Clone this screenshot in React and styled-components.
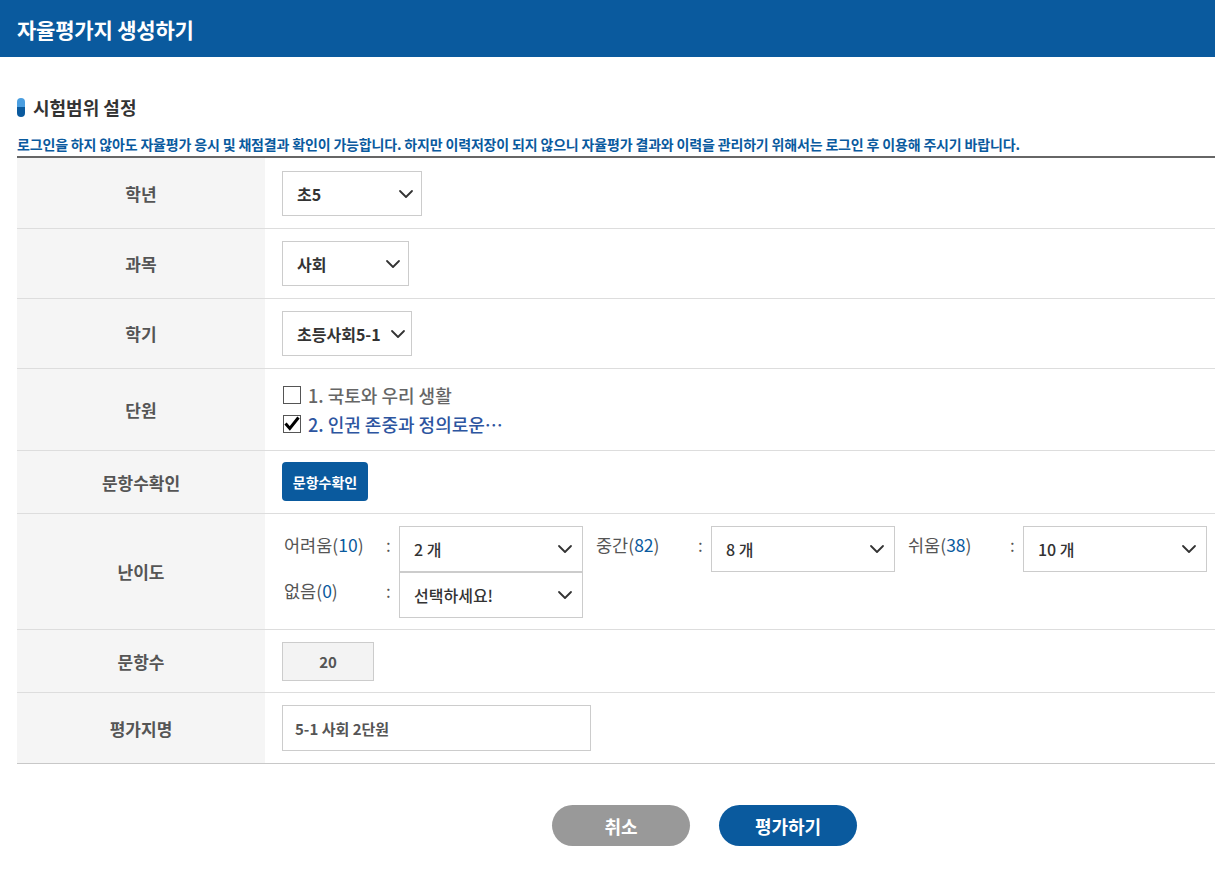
import React from "react";
import styled, { createGlobalStyle } from "styled-components";

const Global = createGlobalStyle`
  html, body { margin: 0; padding: 0; overflow: hidden; background: #fff; }
  body { font-family: "Noto Sans CJK KR", "Noto Sans", sans-serif; color: #444; }
  * { box-sizing: border-box; }
`;

const Page = styled.div`
  width: 1409px;
`;

const Header = styled.header`
  height: 57px;
  background: #0a5a9e;
  display: flex;
  align-items: center;
  padding: 0 17px;
`;

const HeaderTitle = styled.h1`
  margin: 0;
  color: #fff;
  font-size: 21px;
  font-weight: 700;
  letter-spacing: -0.2px;
`;

const Main = styled.main`
  padding: 0 17px 24px;
`;

const SectionTitle = styled.h2`
  margin: 37px 0 0;
  height: 26px;
  display: flex;
  align-items: center;
  gap: 8px;
  font-size: 18px;
  font-weight: 700;
  color: #333;
`;

const Pill = styled.span`
  width: 8px;
  height: 19px;
  border-radius: 4px;
  background: linear-gradient(#4a9ee0 0 50%, #0a5a9e 50% 100%);
`;

const Notice = styled.p`
  margin: 14px 0 0;
  line-height: 20px;
  padding-bottom: 2px;
  font-size: 14px;
  font-weight: 700;
  color: #0a5a9e;
  letter-spacing: -0.17px;
`;

const Table = styled.div`
  border-top: 2px solid #666;
  border-bottom: 1px solid #c8c8c8;
`;

const Row = styled.div`
  display: flex;
  & + & { border-top: 1px solid #ddd; }
`;

const Label = styled.div`
  width: 248px;
  flex: none;
  background: #f5f5f5;
  display: flex;
  align-items: center;
  justify-content: center;
  font-size: 17px;
  font-weight: 700;
  color: #555;
`;

const Cell = styled.div`
  flex: 1;
  display: flex;
  flex-wrap: wrap;
  align-items: center;
  padding: ${(p) => p.$pad || "12px 17px"};
`;

const SelectBox = styled.div`
  width: ${(p) => p.$w}px;
  height: ${(p) => p.$h || 45}px;
  border: 1px solid #ccc;
  background: #fff;
  display: flex;
  align-items: center;
  justify-content: space-between;
  padding: 0 ${(p) => p.$pr || 7}px 0 ${(p) => p.$pl || 14}px;
  font-size: 16px;
  font-weight: ${(p) => p.$weight || 700};
  color: #333;
  white-space: nowrap;
`;

const Chevron = () => (
  <svg width="16" height="10" viewBox="0 0 16 10" fill="none">
    <path d="M2 2 L8 8 L14 2" stroke="#333" strokeWidth="1.8" strokeLinecap="round" strokeLinejoin="round" />
  </svg>
);

const Select = ({ w, h, weight, pl, pr, children }) => (
  <SelectBox $w={w} $h={h} $weight={weight} $pl={pl} $pr={pr}>
    <span>{children}</span>
    <Chevron />
  </SelectBox>
);

const CheckList = styled.div`
  display: flex;
  flex-direction: column;
`;

const CheckItem = styled.label`
  display: flex;
  align-items: center;
  gap: 7px;
  height: 29px;
  font-size: 18px;
  font-weight: 500;
  color: ${(p) => (p.$on ? "#2d55a0" : "#666")};
  padding-left: 1px;
`;

const Box = styled.span`
  width: 18px;
  height: 18px;
  border: 1px solid #555;
  background: #fff;
  display: flex;
  align-items: center;
  justify-content: center;
`;

const Check = ({ on, children }) => (
  <CheckItem $on={on}>
    <Box>
      {on && (
        <svg width="16" height="15" viewBox="0 0 16 15">
          <path d="M1.5 7.5 L5.8 12.5 L14.5 1.5" stroke="#000" strokeWidth="3" fill="none" strokeLinejoin="miter" />
        </svg>
      )}
    </Box>
    {children}
  </CheckItem>
);

const SmallButton = styled.button`
  width: 86px;
  height: 39px;
  border: 0;
  border-radius: 4px;
  background: #0a5a9e;
  color: #fff;
  font-family: inherit;
  font-size: 14px;
  font-weight: 700;
  padding: 0;
`;

const Group = styled.div`
  width: 300px;
  height: 46px;
  display: flex;
  margin-right: 12px;
`;

const GroupLabel = styled.span`
  width: 100px;
  padding-left: 1px;
  line-height: 38px;
  font-size: 17.5px;
  color: #555;
  white-space: nowrap;
  b { font-weight: 400; color: #0a5a9e; }
`;

const Colon = styled.span`
  width: 16px;
  padding-left: 3px;
  line-height: 38px;
  font-size: 17px;
  color: #555;
`;

const Difficulty = ({ name, count, value }) => (
  <Group>
    <GroupLabel>
      {name}(<b>{count}</b>)
    </GroupLabel>
    <Colon>:</Colon>
    <Select w={184} h={46} weight={500} pr={9}>{value}</Select>
  </Group>
);

const ReadBox = styled.div`
  width: ${(p) => p.$w}px;
  height: ${(p) => p.$h}px;
  border: 1px solid #ccc;
  background: ${(p) => (p.$gray ? "#f3f3f3" : "#fff")};
  display: flex;
  align-items: center;
  justify-content: ${(p) => (p.$center ? "center" : "flex-start")};
  padding-left: ${(p) => (p.$center ? 0 : 12)}px;
  font-size: 15px;
  font-weight: 700;
  color: #555;
`;

const Actions = styled.div`
  display: flex;
  justify-content: center;
  gap: 29px;
  margin-top: 41px;
`;

const PillButton = styled.button`
  width: 138px;
  height: 41px;
  border: 0;
  border-radius: 21px;
  background: ${(p) => (p.$primary ? "#0a5a9e" : "#999")};
  color: #fff;
  font-family: inherit;
  font-size: 18px;
  font-weight: 700;
`;

export default function App() {
  return (
    <Page>
      <Global />
      <Header>
        <HeaderTitle>자율평가지 생성하기</HeaderTitle>
      </Header>
      <Main>
        <SectionTitle>
          <Pill />
          시험범위 설정
        </SectionTitle>
        <Notice>
          로그인을 하지 않아도 자율평가 응시 및 채점결과 확인이 가능합니다. 하지만 이력저장이 되지 않으니 자율평가 결과와 이력을 관리하기 위해서는 로그인 후 이용해 주시기 바랍니다.
        </Notice>
        <Table>
          <Row>
            <Label>학년</Label>
            <Cell $pad="13px 17px 12px">
              <Select w={140}>초5</Select>
            </Cell>
          </Row>
          <Row>
            <Label>과목</Label>
            <Cell>
              <Select w={127}>사회</Select>
            </Cell>
          </Row>
          <Row>
            <Label>학기</Label>
            <Cell>
              <Select w={130} pr={5}>초등사회5-1</Select>
            </Cell>
          </Row>
          <Row>
            <Label>단원</Label>
            <Cell $pad="11px 17px 12px">
              <CheckList>
                <Check>1. 국토와 우리 생활</Check>
                <Check on>2. 인권 존중과 정의로운…</Check>
              </CheckList>
            </Cell>
          </Row>
          <Row>
            <Label>문항수확인</Label>
            <Cell $pad="11px 17px 12px">
              <SmallButton>문항수확인</SmallButton>
            </Cell>
          </Row>
          <Row>
            <Label>난이도</Label>
            <Cell $pad="12px 17px 11px 18px">
              <Difficulty name="어려움" count="10" value="2 개" />
              <Difficulty name="중간" count="82" value="8 개" />
              <Difficulty name="쉬움" count="38" value="10 개" />
              <Difficulty name="없음" count="0" value="선택하세요!" />
            </Cell>
          </Row>
          <Row>
            <Label>문항수</Label>
            <Cell $pad="12px 17px 11px">
              <ReadBox $w={92} $h={39} $gray $center>20</ReadBox>
            </Cell>
          </Row>
          <Row>
            <Label>평가지명</Label>
            <Cell $pad="12px 17px 12px">
              <ReadBox $w={309} $h={46}>5-1 사회 2단원</ReadBox>
            </Cell>
          </Row>
        </Table>
        <Actions>
          <PillButton>취소</PillButton>
          <PillButton $primary>평가하기</PillButton>
        </Actions>
      </Main>
    </Page>
  );
}
